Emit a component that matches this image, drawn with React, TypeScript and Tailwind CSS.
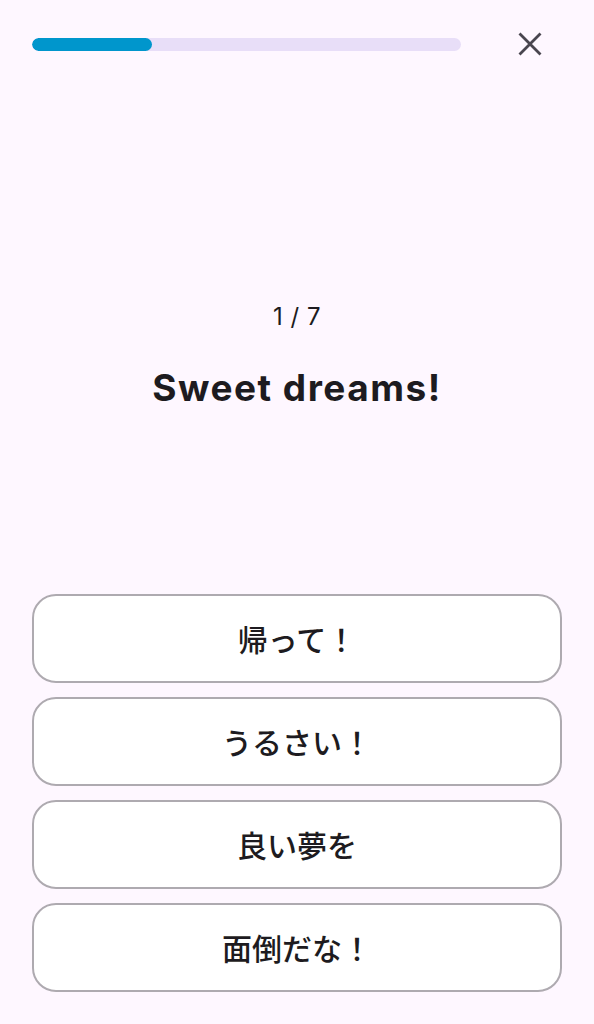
import React from "react";

const options = ["帰って！", "うるさい！", "良い夢を", "面倒だな！"];

export default function App() {
  return (
    <div
      className="h-[1024px] w-full bg-[#fef7ff] flex flex-col"
      style={{ fontFamily: 'Inter, "Noto Sans CJK JP", sans-serif' }}
    >
      <div className="flex items-center h-12 mt-5 pl-8 pr-10">
        <div className="flex-1 h-[13px] rounded-full bg-[#e8def8] overflow-hidden">
          <div className="h-full w-[120px] rounded-full bg-[#0096cc]" />
        </div>
        <button className="ml-[45px] w-12 h-12 flex items-center justify-center text-[#49454f]">
          <svg width="24" height="24" viewBox="0 0 24 24" fill="none" stroke="currentColor" strokeWidth="2.8">
            <path d="M1.5 1.5 L22.5 22.5 M22.5 1.5 L1.5 22.5" />
          </svg>
        </button>
      </div>

      <div className="mt-[233px] text-center text-[24px] leading-8 tracking-[0.5px] text-[#1d1b20]">1 / 7</div>
      <div className="mt-[33px] text-center text-[37px] leading-[44px] font-bold tracking-[1.5px] text-[#1d1b20]">
        Sweet dreams!
      </div>

      <div className="mt-auto flex flex-col gap-[14px] px-8 pb-8">
        {options.map((o) => (
          <button
            key={o}
            className="h-[89px] w-full rounded-[24px] border-2 border-[#aeaab0] bg-white text-[30px] font-medium text-[#1d1b20] flex items-center justify-center"
            style={{ fontFamily: '"Noto Sans CJK JP", sans-serif' }}
          >
            {o}
          </button>
        ))}
      </div>
    </div>
  );
}
